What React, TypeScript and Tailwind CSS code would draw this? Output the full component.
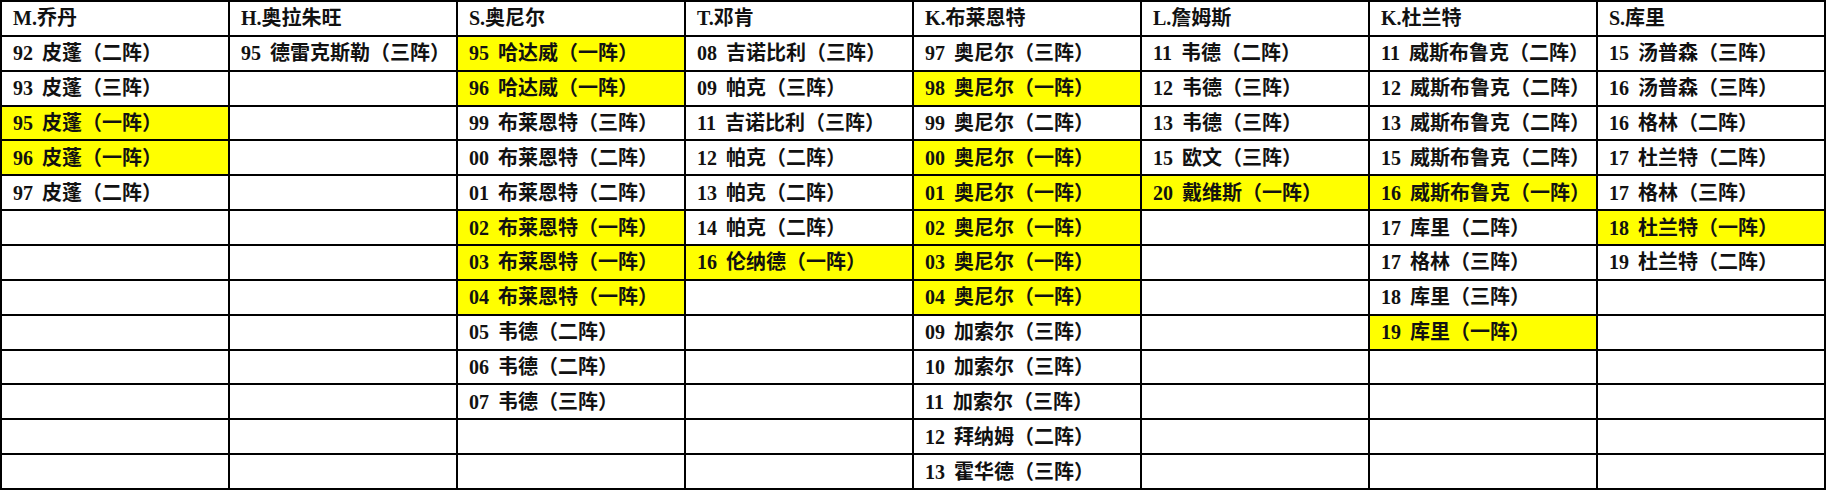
const columns: { head: string; rows: [string, string, boolean][] }[] = [
  {
    head: "M.乔丹",
    rows: [
      ["92", "皮蓬（二阵）", false],
      ["93", "皮蓬（三阵）", false],
      ["95", "皮蓬（一阵）", true],
      ["96", "皮蓬（一阵）", true],
      ["97", "皮蓬（二阵）", false],
    ],
  },
  {
    head: "H.奥拉朱旺",
    rows: [["95", "德雷克斯勒（三阵）", false]],
  },
  {
    head: "S.奥尼尔",
    rows: [
      ["95", "哈达威（一阵）", true],
      ["96", "哈达威（一阵）", true],
      ["99", "布莱恩特（三阵）", false],
      ["00", "布莱恩特（二阵）", false],
      ["01", "布莱恩特（二阵）", false],
      ["02", "布莱恩特（一阵）", true],
      ["03", "布莱恩特（一阵）", true],
      ["04", "布莱恩特（一阵）", true],
      ["05", "韦德（二阵）", false],
      ["06", "韦德（二阵）", false],
      ["07", "韦德（三阵）", false],
    ],
  },
  {
    head: "T.邓肯",
    rows: [
      ["08", "吉诺比利（三阵）", false],
      ["09", "帕克（三阵）", false],
      ["11", "吉诺比利（三阵）", false],
      ["12", "帕克（二阵）", false],
      ["13", "帕克（二阵）", false],
      ["14", "帕克（二阵）", false],
      ["16", "伦纳德（一阵）", true],
    ],
  },
  {
    head: "K.布莱恩特",
    rows: [
      ["97", "奥尼尔（三阵）", false],
      ["98", "奥尼尔（一阵）", true],
      ["99", "奥尼尔（二阵）", false],
      ["00", "奥尼尔（一阵）", true],
      ["01", "奥尼尔（一阵）", true],
      ["02", "奥尼尔（一阵）", true],
      ["03", "奥尼尔（一阵）", true],
      ["04", "奥尼尔（一阵）", true],
      ["09", "加索尔（三阵）", false],
      ["10", "加索尔（三阵）", false],
      ["11", "加索尔（三阵）", false],
      ["12", "拜纳姆（二阵）", false],
      ["13", "霍华德（三阵）", false],
    ],
  },
  {
    head: "L.詹姆斯",
    rows: [
      ["11", "韦德（二阵）", false],
      ["12", "韦德（三阵）", false],
      ["13", "韦德（三阵）", false],
      ["15", "欧文（三阵）", false],
      ["20", "戴维斯（一阵）", true],
    ],
  },
  {
    head: "K.杜兰特",
    rows: [
      ["11", "威斯布鲁克（二阵）", false],
      ["12", "威斯布鲁克（二阵）", false],
      ["13", "威斯布鲁克（二阵）", false],
      ["15", "威斯布鲁克（二阵）", false],
      ["16", "威斯布鲁克（一阵）", true],
      ["17", "库里（二阵）", false],
      ["17", "格林（三阵）", false],
      ["18", "库里（三阵）", false],
      ["19", "库里（一阵）", true],
    ],
  },
  {
    head: "S.库里",
    rows: [
      ["15", "汤普森（三阵）", false],
      ["16", "汤普森（三阵）", false],
      ["16", "格林（二阵）", false],
      ["17", "杜兰特（二阵）", false],
      ["17", "格林（三阵）", false],
      ["18", "杜兰特（一阵）", true],
      ["19", "杜兰特（二阵）", false],
    ],
  },
];

const ROWS = 13;

export default function App() {
  const cells: JSX.Element[] = [];

  columns.forEach((col, c) => {
    cells.push(
      <div key={`h-${c}`} className="flex items-center bg-white px-[11px]">
        {col.head}
      </div>
    );
  });

  for (let r = 0; r < ROWS; r++) {
    columns.forEach((col, c) => {
      const row = col.rows[r];
      cells.push(
        <div
          key={`${r}-${c}`}
          className={`flex items-center px-[11px] ${
            row && row[2] ? "bg-[#ffff00]" : "bg-white"
          }`}
        >
          {row && (
            <>
              <span>{row[0]}</span>
              <span className="ml-[9px]">{row[1]}</span>
            </>
          )}
        </div>
      );
    });
  }

  return (
    <div
      className="grid h-[490px] w-[1826px] grid-cols-8 grid-rows-[repeat(14,1fr)] gap-[2px] bg-black p-[2px] text-[20px] font-bold leading-none whitespace-nowrap text-[#111] [text-spacing-trim:space-all] [font-feature-settings:'fwid']"
      style={{ fontFamily: '"Liberation Serif", "Noto Sans CJK SC", serif' }}
    >
      {cells}
    </div>
  );
}
